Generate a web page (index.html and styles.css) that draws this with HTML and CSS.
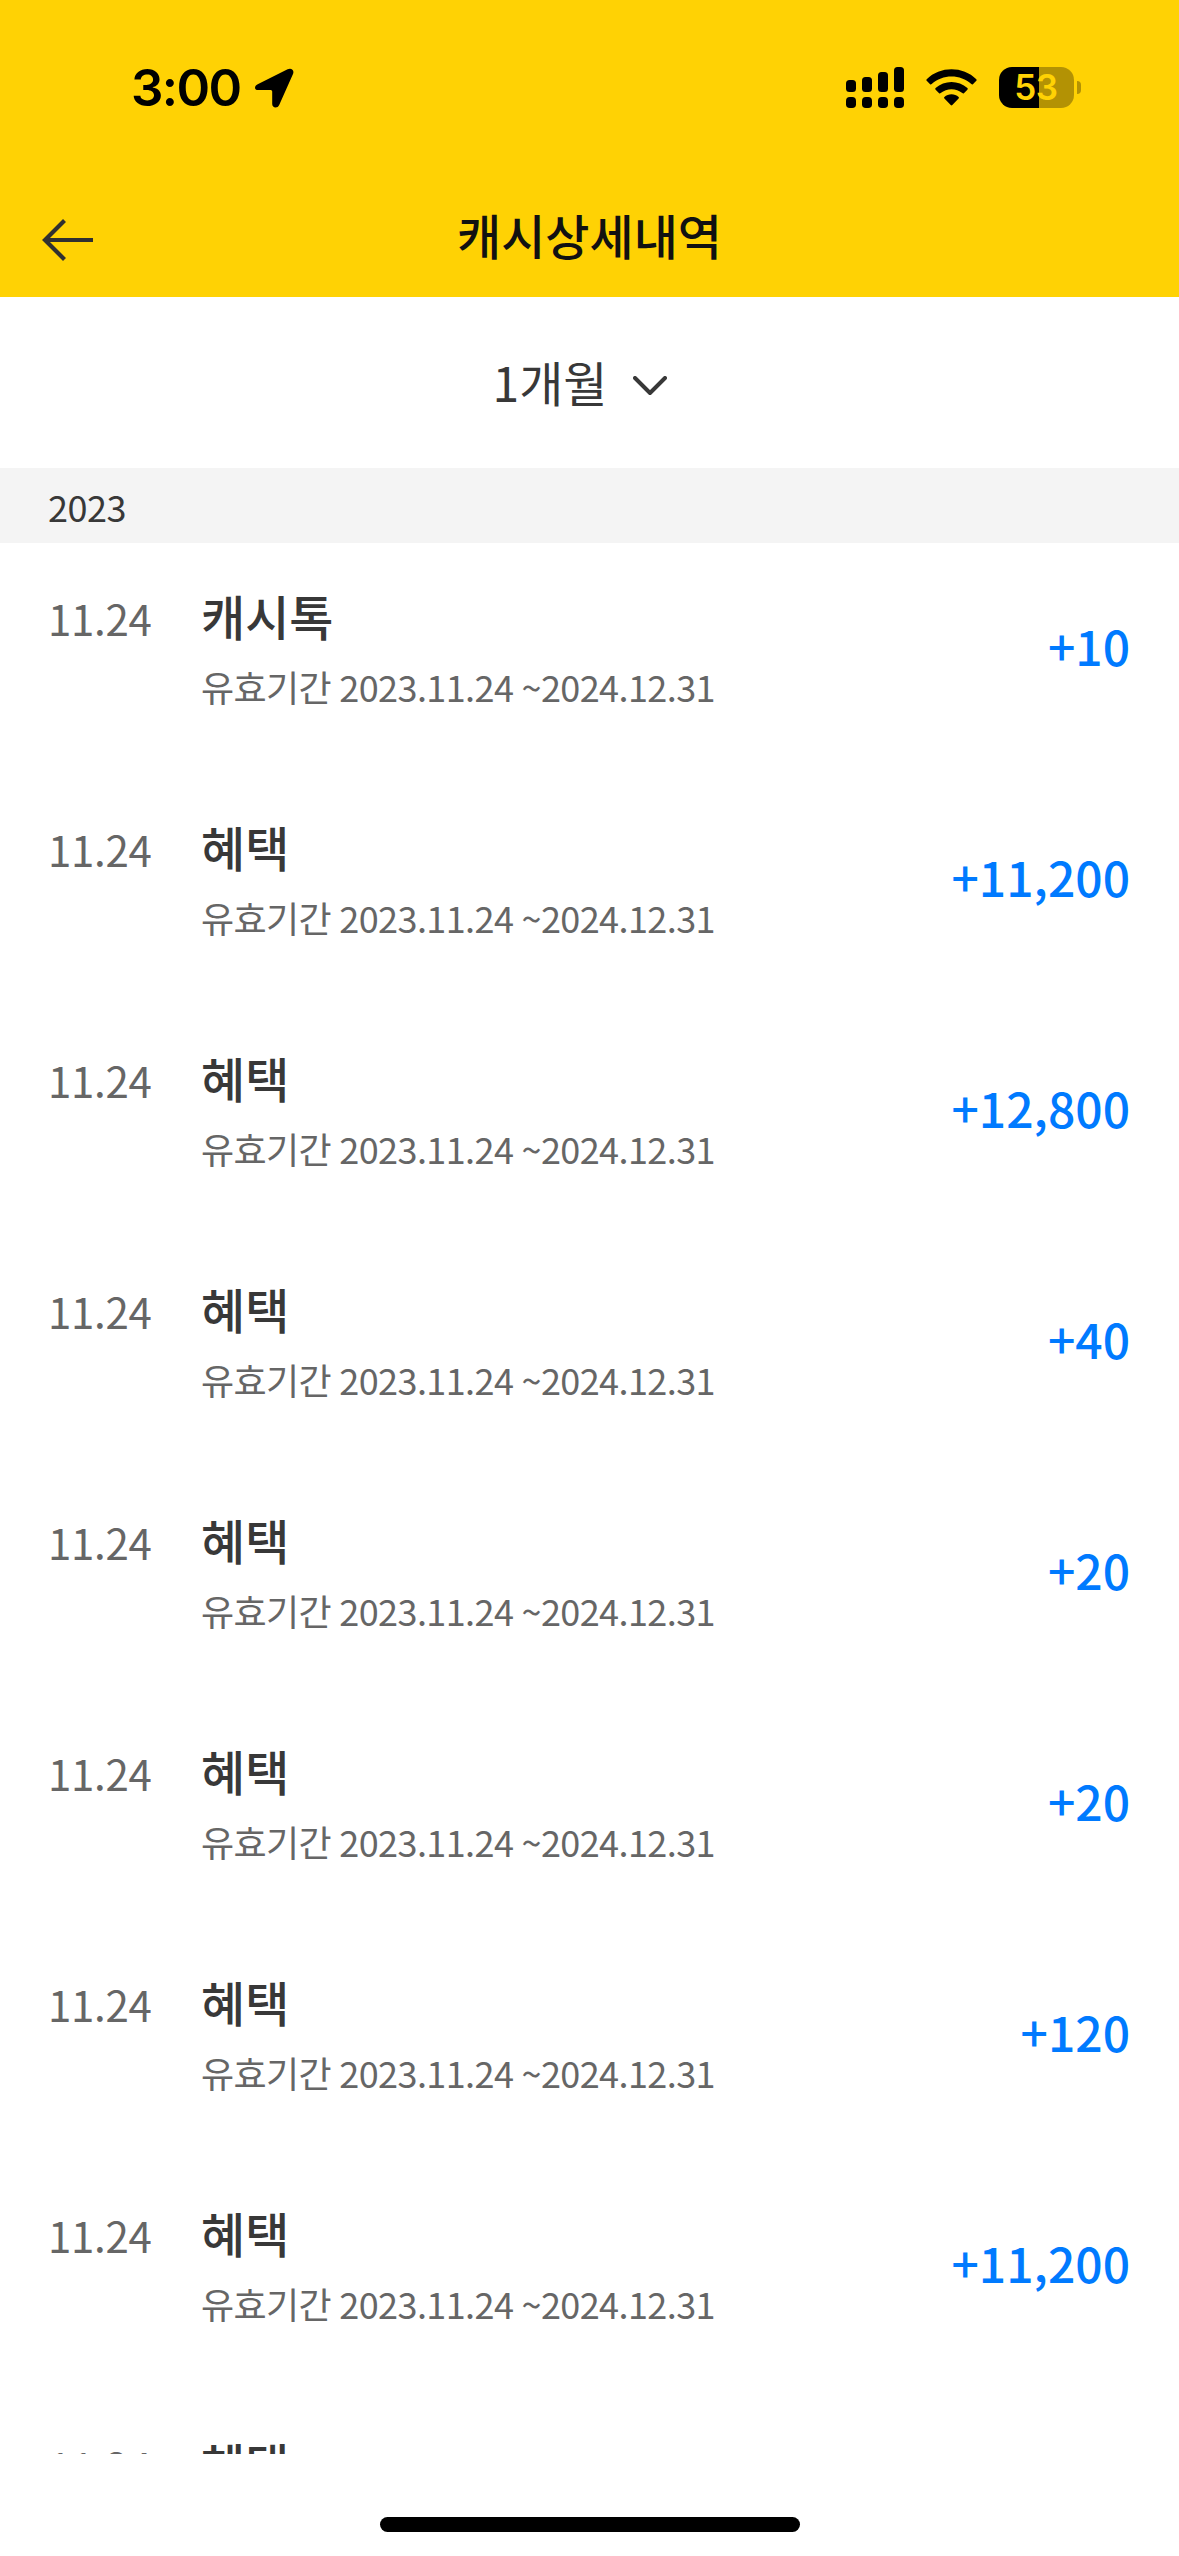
FILE: index.html
```html
<!DOCTYPE html>
<html lang="ko">
<head>
<meta charset="utf-8">
<title>캐시상세내역</title>
<link rel="stylesheet" href="styles.css">
</head>
<body>
<div class="screen">
  <header class="header">
    <div class="status">
      <div class="status-left">
        <span class="time">3:00</span>
        <svg class="location" width="40" height="40" viewBox="0 0 40 40"><path d="M3.7 16.2 33.6 1.3C37.2-.5 40.6 2 39 6L25.2 36.9C23.7 40.6 18.2 40.2 18.2 36V23.5Q18.2 22 16.7 22H4.2C.1 22 0 18 3.7 16.2Z"/></svg>
      </div>
      <div class="status-right">
        <svg width="58" height="41" viewBox="0 0 58 41"><rect y="13" width="10" height="12" rx="3.5"/><rect x="16" y="10" width="10" height="15" rx="3.5"/><rect x="32" y="5" width="10" height="20" rx="3.5"/><rect x="48" width="10" height="25" rx="3.5"/><rect y="30" width="10" height="11" rx="3.8"/><rect x="16" y="30" width="10" height="11" rx="3.8"/><rect x="32" y="30" width="10" height="11" rx="3.8"/><rect x="48" y="30" width="10" height="11" rx="3.8"/></svg>
        <svg class="wifi" width="51" height="38" viewBox="0 0 51 38"><path d="M.7 10.2C14-3.1 37-3.1 50.3 10.2Q51 11 50.3 11.8L46.9 15.2Q46.2 15.9 45.3 15.1C34.5 5 16.5 5 5.7 15.1Q4.8 15.9 4.1 15.2L.7 11.8Q0 11 .7 10.2Z"/><path d="M9.6 19.1C18.3 10.9 32.7 10.9 41.4 19.1Q42.2 19.9 41.4 20.7L37.9 24.2Q37.2 24.9 36.3 24.1C30.3 18.9 20.7 18.9 14.7 24.1Q13.8 24.9 13.1 24.2L9.6 20.7Q8.8 19.9 9.6 19.1Z"/><path d="M18.4 28C22.2 24.4 28.8 24.4 32.6 28Q33.4 28.8 32.6 29.6L26.3 36Q25.5 36.8 24.7 36L18.4 29.6Q17.6 28.8 18.4 28Z"/></svg>
        <div class="battery"><div class="battery-body"><span class="battery-level">53</span></div><div class="battery-tip"></div></div>
      </div>
    </div>
    <div class="nav">
      <svg class="back" width="51" height="42" viewBox="0 0 51 42"><path d="M2 21H51M22.5 1.5 3 21 22.5 40.5"/></svg>
      <h1 class="nav-title">캐시상세내역</h1>
    </div>
  </header>
  <div class="period">
    <span class="period-label">1개월</span>
    <svg class="chevron" width="34" height="20" viewBox="0 0 34 20"><path d="M2 2 17 17 32 2"/></svg>
  </div>
  <div class="year">2023</div>
  <ul class="list">
    <li class="item"><span class="date">11.24</span><div class="info"><strong class="name">캐시톡</strong><span class="valid">유효기간 2023.11.24 ~2024.12.31</span></div><span class="amount">+10</span></li>
    <li class="item"><span class="date">11.24</span><div class="info"><strong class="name">혜택</strong><span class="valid">유효기간 2023.11.24 ~2024.12.31</span></div><span class="amount">+11,200</span></li>
    <li class="item"><span class="date">11.24</span><div class="info"><strong class="name">혜택</strong><span class="valid">유효기간 2023.11.24 ~2024.12.31</span></div><span class="amount">+12,800</span></li>
    <li class="item"><span class="date">11.24</span><div class="info"><strong class="name">혜택</strong><span class="valid">유효기간 2023.11.24 ~2024.12.31</span></div><span class="amount">+40</span></li>
    <li class="item"><span class="date">11.24</span><div class="info"><strong class="name">혜택</strong><span class="valid">유효기간 2023.11.24 ~2024.12.31</span></div><span class="amount">+20</span></li>
    <li class="item"><span class="date">11.24</span><div class="info"><strong class="name">혜택</strong><span class="valid">유효기간 2023.11.24 ~2024.12.31</span></div><span class="amount">+20</span></li>
    <li class="item"><span class="date">11.24</span><div class="info"><strong class="name">혜택</strong><span class="valid">유효기간 2023.11.24 ~2024.12.31</span></div><span class="amount">+120</span></li>
    <li class="item"><span class="date">11.24</span><div class="info"><strong class="name">혜택</strong><span class="valid">유효기간 2023.11.24 ~2024.12.31</span></div><span class="amount">+11,200</span></li>
    <li class="item"><span class="date">11.24</span><div class="info"><strong class="name">혜택</strong></div></li>
  </ul>
  <footer class="home"><div class="home-bar"></div></footer>
</div>
</body>
</html>
```
FILE: styles.css
```css
* { box-sizing: border-box; margin: 0; padding: 0; }
body { background: #fff; font-family: "Noto Sans CJK KR", sans-serif; color: #383838; }
svg { display: block; flex: none; }
.screen { width: 1179px; height: 2556px; display: flex; flex-direction: column; overflow: hidden; }
.header { height: 297px; flex: none; background: #ffd204; }
.status { height: 175px; display: flex; justify-content: space-between; padding: 0 98px 0 131px; }
.status-left, .status-right { display: flex; align-items: center; }
.status-left { gap: 13px; }
.time { font: 600 51px/60px Inter, sans-serif; color: #000; letter-spacing: -1.6px; }
.location { margin-top: 1px; }
.wifi { margin-left: 22px; }
.battery { display: flex; align-items: center; gap: 3px; margin-left: 22px; }
.battery-body { width: 75px; height: 41px; border-radius: 13px; background: linear-gradient(to right, #000 40px, #b39204 40px); display: flex; align-items: center; justify-content: center; }
.battery-level { font: 600 35px/41px Inter, sans-serif; color: #ffd204; letter-spacing: -.3px; margin-right: 1px; }
.battery-tip { width: 4px; height: 13px; border-radius: 0 4px 4px 0; background: #b39204; }
.nav { height: 122px; display: grid; grid-template-columns: 150px 1fr 150px; }
.back { margin: 44px 0 0 42px; fill: none; stroke: #303030; stroke-width: 4.2; }
.nav-title { text-align: center; font-size: 48px; font-weight: 500; line-height: 72px; padding-top: 23px; color: #111; }
.period { height: 171px; flex: none; display: flex; align-items: center; justify-content: center; gap: 26px; padding: 0 19px 4px 0; }
.period-label { font-size: 48px; line-height: 72px; }
.chevron { fill: none; stroke: #383838; stroke-width: 4; stroke-linecap: round; stroke-linejoin: round; margin-top: 10px; }
.year { height: 75px; flex: none; background: #f4f4f4; padding: 1px 48px 0; font-size: 36px; line-height: 75px; letter-spacing: -.5px; }
.list { height: 1911px; flex: none; overflow: hidden; list-style: none; }
.item { height: 231px; display: flex; padding: 36px 49px 61px 48px; }
.date { width: 153px; flex: none; font-size: 42px; line-height: 77px; color: #666; letter-spacing: -.3px; }
.info { flex: 1; display: flex; flex-direction: column; gap: 8px; }
.name { font-size: 48px; font-weight: 500; line-height: 72px; }
.valid { font-size: 36px; line-height: 54px; color: #666; letter-spacing: -.6px; word-spacing: -1.2px; }
.amount { align-self: center; font-size: 48px; font-weight: 500; line-height: 72px; margin-top: -2px; color: #007aff; }
.home { flex: 1; display: flex; justify-content: center; padding-top: 63px; }
.home-bar { width: 420px; height: 15px; border-radius: 8px; background: #000; }
```
